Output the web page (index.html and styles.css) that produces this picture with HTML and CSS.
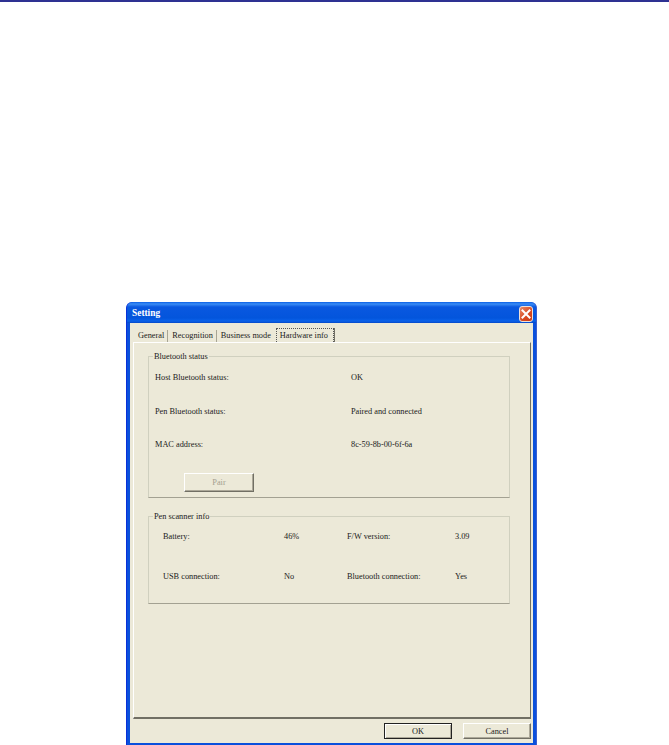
FILE: index.html
```html
<!DOCTYPE html>
<html lang="en">
<head>
    <meta charset="UTF-8">
    <title>Setting</title>
    <link rel="stylesheet" href="styles.css">
</head>
<body>
    <div class="top-rule"></div>
    <div class="window">
        <div class="titlebar">
            <span class="title">Setting</span>
            <span class="close">
                <svg width="12" height="12" viewBox="0 0 12 12"><path d="M2.5 2.5l7 7M9.5 2.5l-7 7" stroke="#fff" stroke-width="2" fill="none" stroke-linecap="square"/></svg>
            </span>
        </div>
        <div class="client">
            <div class="tabs">
                <span class="tab tab-sep">General</span>
                <span class="tab tab-sep">Recognition</span>
                <span class="tab">Business mode</span>
                <span class="tab tab-active"><span class="focus">Hardware info</span></span>
            </div>
            <div class="page">
                <fieldset class="group group-bt">
                    <legend>Bluetooth status</legend>
                    <div class="bt-grid">
                        <span>Host Bluetooth status:</span><span>OK</span>
                        <span>Pen Bluetooth status:</span><span>Paired and connected</span>
                        <span>MAC address:</span><span>8c-59-8b-00-6f-6a</span>
                    </div>
                    <button class="btn btn-pair" disabled>Pair</button>
                </fieldset>
                <fieldset class="group group-pen">
                    <legend>Pen scanner info</legend>
                    <div class="pen-grid">
                        <span>Battery:</span><span>46%</span><span>F/W version:</span><span>3.09</span>
                        <span>USB connection:</span><span>No</span><span>Bluetooth connection:</span><span>Yes</span>
                    </div>
                </fieldset>
            </div>
            <div class="actions">
                <button class="btn btn-default">OK</button>
                <button class="btn">Cancel</button>
            </div>
        </div>
    </div>
</body>
</html>
```

FILE: styles.css
```css
html, body {
    height: 745px;
    overflow: hidden;
}
body {
    margin: 0;
    background: #fff;
    font-family: "Liberation Serif", serif;
    font-size: 8.3px;
    color: #1a1a1a;
}
.top-rule {
    height: 2px;
    background: #2e3192;
}
.window {
    width: 411px;
    height: 443px;
    margin: 300px 0 0 126px;
    padding: 0 3px 2px;
    box-sizing: border-box;
    display: flex;
    flex-direction: column;
    background: #0a50dc;
    border-radius: 6px 6px 0 0;
    border-left: 1px solid #0831d9;
    border-right: 1px solid #3a5fd0;
}
.titlebar {
    height: 21px;
    flex: none;
    margin: 0 -3px;
    padding: 0 3px 0 5px;
    display: flex;
    align-items: center;
    justify-content: space-between;
    border-radius: 6px 6px 0 0;
    background: linear-gradient(#0a5fe6 0, #3a8cf5 2px, #0a58e0 5px, #0355dc 16px, #0a62ea 19px, #0448c8 21px);
}
.title {
    color: #fff;
    font-weight: bold;
    font-size: 9.4px;
}
.close {
    width: 12px;
    height: 14px;
    margin-top: 3px;
    display: flex;
    align-items: center;
    justify-content: center;
    border: 1px solid #f0e0d8;
    border-radius: 3px;
    background: linear-gradient(135deg, #e88a68, #d8481f 60%, #c83a18);
}
.close svg {
    display: block;
}
.client {
    flex: 1;
    display: flex;
    flex-direction: column;
    padding: 0 2px 0 3px;
    background: #ece9d8;
}
.tabs {
    height: 19px;
    flex: none;
    display: flex;
    align-items: flex-end;
    padding-left: 1px;
    box-sizing: border-box;
}
.tab {
    white-space: nowrap;
    padding: 0 3px 0 4px;
    line-height: 12px;
}
.tab-sep {
    border-right: 1px solid #a8a594;
}
.tab-active {
    padding: 0;
    margin-left: 2px;
    border-right: 1px solid #716f64;
}
.focus {
    display: block;
    padding: 0 5px 0 3px;
    line-height: 13px;
    height: 13px;
    border: 1px dotted #555;
    border-bottom: none;
}
.page {
    height: 377px;
    flex: none;
    box-sizing: border-box;
    padding: 8px 20px 0 14px;
    border-top: 1px solid #fff;
    border-left: 1px solid #fff;
    border-right: 1px solid #716f64;
    border-bottom: 2px solid #716f64;
}
.group {
    margin: 0;
    padding: 0;
    min-width: 0;
    border: 1px solid #d0d0bf;
    border-bottom-color: #a3a192;
    box-sizing: border-box;
}
.group legend {
    margin-left: 4px;
    padding: 0 1px;
    line-height: 11px;
}
.group-bt {
    height: 147px;
}
.group-pen {
    height: 93px;
    margin-top: 13px;
}
.bt-grid {
    display: grid;
    grid-template-columns: 196px 1fr;
    grid-auto-rows: 33.5px;
    padding: 6px 0 0 6px;
    line-height: 20px;
}
.pen-grid {
    display: grid;
    grid-template-columns: 121px 63px 108px 1fr;
    grid-auto-rows: 40px;
    padding: 5px 0 0 14px;
    line-height: 20px;
}
.btn {
    display: block;
    width: 70px;
    height: 19px;
    padding: 0;
    font: inherit;
    color: #1a1a1a;
    background: #ece9d8;
    border: 1px solid;
    border-color: #fff #716f64 #716f64 #fff;
    box-shadow: inset -1px -1px 0 #aca899;
}
.btn-pair {
    margin: 4px 0 0 35px;
    color: #a3a08f;
}
.actions {
    display: flex;
    justify-content: flex-end;
    gap: 11px;
    padding-top: 4px;
}
.actions .btn {
    width: 68px;
    height: 16px;
}
.btn-default {
    border-color: #222;
    box-shadow: inset 1px 1px 0 #fff, inset -1px -1px 0 #aca899;
}
```
